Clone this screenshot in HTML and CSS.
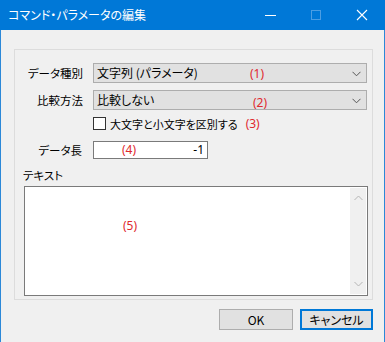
FILE: index.html
```html
<!DOCTYPE html>
<html lang="ja">
<head>
<meta charset="utf-8">
<link rel="stylesheet" href="styles.css">
</head>
<body>
<div class="window">
  <div class="titlebar">
    <span class="title">コマンド・パラメータの編集</span>
    <div class="controls">
      <svg class="ctl" width="46" height="30" viewBox="0 0 46 30"><line x1="18" y1="15.5" x2="29" y2="15.5" stroke="#fff" stroke-width="1"/></svg>
      <svg class="ctl" width="46" height="30" viewBox="0 0 46 30"><rect x="18.5" y="10.5" width="9" height="9" fill="none" stroke="#4c9ee3" stroke-width="1"/></svg>
      <svg class="ctl" width="46" height="30" viewBox="0 0 46 30"><path d="M18 10 L28 20 M28 10 L18 20" stroke="#fff" stroke-width="1.1"/></svg>
    </div>
  </div>
  <div class="content">
    <div class="panel">
      <div class="row r1">
        <span class="label">データ種別</span>
        <div class="combo">
          <span class="val">文字列 (パラメータ)</span>
          <span class="num n1">(1)</span>
          <svg class="chev" width="9" height="6" viewBox="0 0 9 6"><path d="M0.5 0.8 L4.5 4.8 L8.5 0.8" fill="none" stroke="#555" stroke-width="1"/></svg>
        </div>
      </div>
      <div class="row r2">
        <span class="label">比較方法</span>
        <div class="combo">
          <span class="val">比較しない</span>
          <span class="num n2">(2)</span>
          <svg class="chev" width="9" height="6" viewBox="0 0 9 6"><path d="M0.5 0.8 L4.5 4.8 L8.5 0.8" fill="none" stroke="#555" stroke-width="1"/></svg>
        </div>
      </div>
      <div class="row r3">
        <span class="label"></span>
        <div class="check">
          <span class="box"></span>
          <span class="ctext">大文字と小文字を区別する</span>
          <span class="num n3">(3)</span>
        </div>
      </div>
      <div class="row r4">
        <span class="label">データ長</span>
        <div class="input">
          <span class="num n4">(4)</span>
          <span class="ival">-1</span>
        </div>
      </div>
      <div class="tlabel">テキスト</div>
      <div class="textarea">
        <div class="tbody"><span class="num n5">(5)</span></div>
        <div class="scroll">
          <svg width="9" height="6" viewBox="0 0 9 6"><path d="M0.5 5 L4.5 1 L8.5 5" fill="none" stroke="#b5b5b5" stroke-width="1"/></svg>
          <svg width="9" height="6" viewBox="0 0 9 6"><path d="M0.5 1 L4.5 5 L8.5 1" fill="none" stroke="#b5b5b5" stroke-width="1"/></svg>
        </div>
      </div>
    </div>
    <div class="buttons">
      <div class="btn">OK</div>
      <div class="btn default">キャンセル</div>
    </div>
  </div>
</div>
</body>
</html>
```

FILE: styles.css
```css
* { box-sizing: border-box; }
html, body { margin: 0; padding: 0; }
body {
  width: 385px;
  height: 342px;
  overflow: hidden;
  font-family: "Noto Sans CJK JP", "Noto Sans", sans-serif;
  font-size: 11.5px;
  font-feature-settings: "palt";
  color: #000;
  background: #f0f0f0;
}
.window {
  width: 385px;
  height: 342px;
  background: #f0f0f0;
  border-left: 1px solid #2b88d8;
  border-right: 1px solid #2b88d8;
}
.titlebar {
  height: 30px;
  background: #0078d7;
  display: flex;
  align-items: center;
  justify-content: space-between;
  margin-left: -1px;
  margin-right: -1px;
}
.title {
  color: #fff;
  padding-left: 8px;
  font-size: 12px;
  line-height: 30px;
}
.controls { display: flex; }
.ctl { display: block; }
.content {
  padding: 19px 0 0 13px;
}
.panel {
  width: 359px;
  height: 251px;
  border: 1px solid #dcdcdc;
  padding: 13px 5px 0 0;
}
.row {
  display: grid;
  grid-template-columns: 78px 1fr;
  align-items: center;
}
.label {
  text-align: right;
  padding-right: 10px;
  line-height: 16px;
}
.r2 { margin-top: 7px; }
.r3 { margin-top: 7px; height: 13px; }
.r4 { margin-top: 11px; }
.r4 .label { padding-right: 11px; }
.combo {
  position: relative;
  height: 20px;
  background: #e1e1e1;
  border: 1px solid #adadad;
  display: flex;
  align-items: center;
  padding-left: 3px;
}
.val { line-height: 18px; font-size: 12px; }
.chev { position: absolute; right: 5px; top: 7px; }
.num {
  color: #e0282e;
  font-family: "Noto Sans", sans-serif;
  font-size: 12px;
  line-height: 16px;
}
.n1 { position: absolute; left: 156px; top: 2px; }
.n2 { position: absolute; left: 159px; top: 4px; }
.check {
  display: flex;
  align-items: center;
  height: 13px;
}
.box {
  width: 13px;
  height: 13px;
  border: 1px solid #333;
  background: #fff;
  flex: none;
}
.ctext { margin-left: 4px; line-height: 16px; font-size: 11px; }
.n3 { margin-left: 8px; }
.input {
  position: relative;
  width: 115px;
  height: 18px;
  background: #fff;
  border: 1px solid #7a7a7a;
  display: flex;
  align-items: center;
  justify-content: flex-end;
  padding-right: 3px;
}
.n4 { position: absolute; left: 28px; top: 0px; }
.ival { font-family: "Noto Sans", sans-serif; line-height: 16px; font-size: 12px; }
.tlabel {
  margin: 8px 0 0 8px;
  line-height: 16px;
}
.textarea {
  margin: 3px 0 0 9px;
  width: 344px;
  height: 110px;
  border: 1px solid #7a7a7a;
  background: #fff;
  display: flex;
}
.tbody {
  flex: 1;
  padding: 30px 0 0 98px;
}
.scroll {
  width: 16px;
  background: #f0f0f0;
  display: flex;
  flex-direction: column;
  justify-content: space-between;
  align-items: center;
  padding: 7px 0 7px 0;
  margin: 1px 1px 1px 0;
}
.scroll svg { display: block; }
.buttons {
  display: flex;
  justify-content: flex-end;
  gap: 7px;
  width: 359px;
  margin-top: 9px;
}
.btn {
  width: 74px;
  height: 21px;
  background: #e1e1e1;
  border: 1px solid #adadad;
  display: flex;
  align-items: center;
  justify-content: center;
  line-height: 16px;
  font-size: 12px;
}
.btn.default {
  width: 73px;
  border: 2px solid #0078d7;
}
```
